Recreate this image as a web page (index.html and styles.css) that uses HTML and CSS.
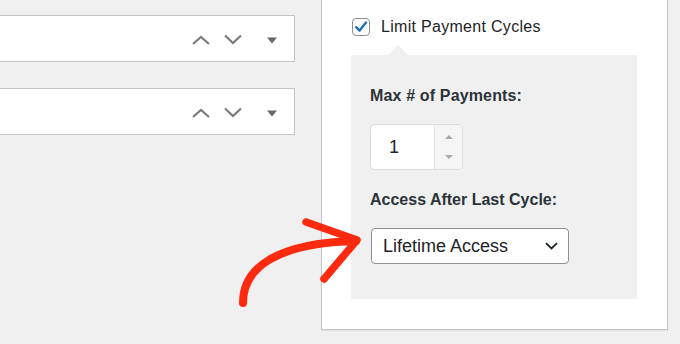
FILE: index.html
```html
<!DOCTYPE html>
<html lang="en">
<head>
<meta charset="utf-8">
<title>Limit Payment Cycles</title>
<link rel="stylesheet" href="styles.css">
</head>
<body>
<div class="page">
  <div class="left">
    <div class="card">
      <svg class="ctl" width="20" height="20" viewBox="0 0 20 20"><path d="M2 15 L10 8 L18 15" fill="none" stroke="#787c82" stroke-width="2.2"/></svg>
      <svg class="ctl down" width="20" height="20" viewBox="0 0 20 20"><path d="M2 6.5 L10 14 L18 6.5" fill="none" stroke="#787c82" stroke-width="2.2"/></svg>
      <svg class="ctl tri" width="20" height="20" viewBox="0 0 20 20"><path d="M5 8.5 L15 8.5 L10 14.5 Z" fill="#646970"/></svg>
    </div>
    <div class="card">
      <svg class="ctl" width="20" height="20" viewBox="0 0 20 20"><path d="M2 15 L10 8 L18 15" fill="none" stroke="#787c82" stroke-width="2.2"/></svg>
      <svg class="ctl down" width="20" height="20" viewBox="0 0 20 20"><path d="M2 6.5 L10 14 L18 6.5" fill="none" stroke="#787c82" stroke-width="2.2"/></svg>
      <svg class="ctl tri" width="20" height="20" viewBox="0 0 20 20"><path d="M5 8.5 L15 8.5 L10 14.5 Z" fill="#646970"/></svg>
    </div>
  </div>
  <div class="panel">
    <label class="check-row">
      <span class="checkbox"><svg width="16" height="16" viewBox="0 0 16 16"><path d="M3.2 8.2 L6.6 11.6 L13 3.6" fill="none" stroke="#2271b1" stroke-width="2.4" stroke-linecap="round" stroke-linejoin="round"/></svg></span>
      <span class="check-text">Limit Payment Cycles</span>
    </label>
    <div class="sub">
      <div class="field-label">Max # of Payments:</div>
      <div class="number">
        <span class="num-val">1</span>
        <span class="spin"><span class="sp-up"></span><span class="sp-down"></span></span>
      </div>
      <div class="field-label access">Access After Last Cycle:</div>
      <div class="select">
        <span>Lifetime Access</span>
        <svg width="13" height="8" viewBox="0 0 13 8"><path d="M1 1.2 L6.5 6.5 L12 1.2" fill="none" stroke="#1d2327" stroke-width="1.8"/></svg>
      </div>
    </div>
  </div>
  <svg class="arrow" width="680" height="344" viewBox="0 0 680 344">
    <g fill="none" stroke="#fd2a0f" stroke-linecap="round" stroke-linejoin="round">
      <path d="M243 303 C 243 268, 276 243, 356 241" stroke-width="8"/>
      <path d="M306 222 L 357 240 L 324 279" stroke-width="7.5"/>
    </g>
  </svg>
</div>
</body>
</html>
```

FILE: styles.css
```css
body {
  margin: 0;
  background: #f0f0f1;
  font-family: "Liberation Sans", Arial, sans-serif;
  color: #1d2327;
}

.page {
  position: relative;
  width: 680px;
  height: 344px;
  overflow: hidden;
  display: flex;
  align-items: flex-start;
  gap: 26px;
}

.left {
  width: 296px;
  margin-left: -1px;
  padding-top: 15px;
  display: flex;
  flex-direction: column;
  gap: 26px;
}

.card {
  box-sizing: border-box;
  height: 47px;
  background: #fff;
  border: 1px solid #c3c4c7;
  display: flex;
  align-items: center;
  justify-content: flex-end;
  padding-right: 12px;
}

.ctl { display: block; }
.ctl.down { margin-left: 12px; }
.ctl.tri { margin-left: 19px; }

.panel {
  box-sizing: border-box;
  width: 347px;
  margin-top: -1px;
  background: #fff;
  border: 1px solid #c3c4c7;
  box-shadow: 0 1px 1px rgba(0, 0, 0, 0.06);
  padding: 17px 30px 30px 30px;
}

.check-row {
  display: flex;
  align-items: center;
  height: 20px;
}

.checkbox {
  box-sizing: border-box;
  width: 18px;
  height: 18px;
  border: 1px solid #8c8f94;
  border-radius: 4px;
  background: #fff;
  display: flex;
  align-items: center;
  justify-content: center;
}

.checkbox svg { display: block; }

.check-text {
  margin-left: 11px;
  font-size: 16px;
  line-height: 20px;
  letter-spacing: 0.3px;
}

.sub {
  position: relative;
  margin-top: 18px;
  margin-left: -1px;
  background: #f0f0f1;
  padding: 31px 19px 35px 19px;
}

.sub::before {
  content: "";
  position: absolute;
  left: 37px;
  top: -10px;
  border-left: 10px solid transparent;
  border-right: 10px solid transparent;
  border-bottom: 10px solid #f0f0f1;
}

.field-label {
  font-size: 16px;
  font-weight: 700;
  line-height: 20px;
  color: #2c3338;
  letter-spacing: 0.15px;
}

.field-label.access {
  margin-top: 20px;
  letter-spacing: 0;
}

.number {
  box-sizing: border-box;
  margin-top: 18px;
  width: 93px;
  height: 46px;
  background: #fff;
  border: 1px solid #dcdcde;
  border-radius: 5px;
  display: flex;
  overflow: hidden;
}

.num-val {
  flex: 1;
  padding-left: 18px;
  font-size: 18px;
  line-height: 44px;
}

.spin {
  width: 28px;
  border-left: 1px solid #e0e0e2;
  background: #f5f5f6;
  display: flex;
  flex-direction: column;
  align-items: center;
  justify-content: space-between;
  padding: 10px 0 10px;
  box-sizing: border-box;
}

.sp-up {
  width: 0;
  height: 0;
  border-left: 4.5px solid transparent;
  border-right: 4.5px solid transparent;
  border-bottom: 4px solid #a7aaad;
}

.sp-down {
  width: 0;
  height: 0;
  border-left: 4.5px solid transparent;
  border-right: 4.5px solid transparent;
  border-top: 4px solid #a7aaad;
}

.select {
  box-sizing: border-box;
  margin-top: 18px;
  margin-left: 1px;
  width: 198px;
  height: 36px;
  background: #fff;
  border: 1px solid #8c8f94;
  border-radius: 4px;
  display: flex;
  align-items: center;
  justify-content: space-between;
  padding: 0 10px 0 11px;
  font-size: 18px;
}

.select svg { display: block; }

.arrow {
  position: absolute;
  left: 0;
  top: 0;
  pointer-events: none;
}
```
